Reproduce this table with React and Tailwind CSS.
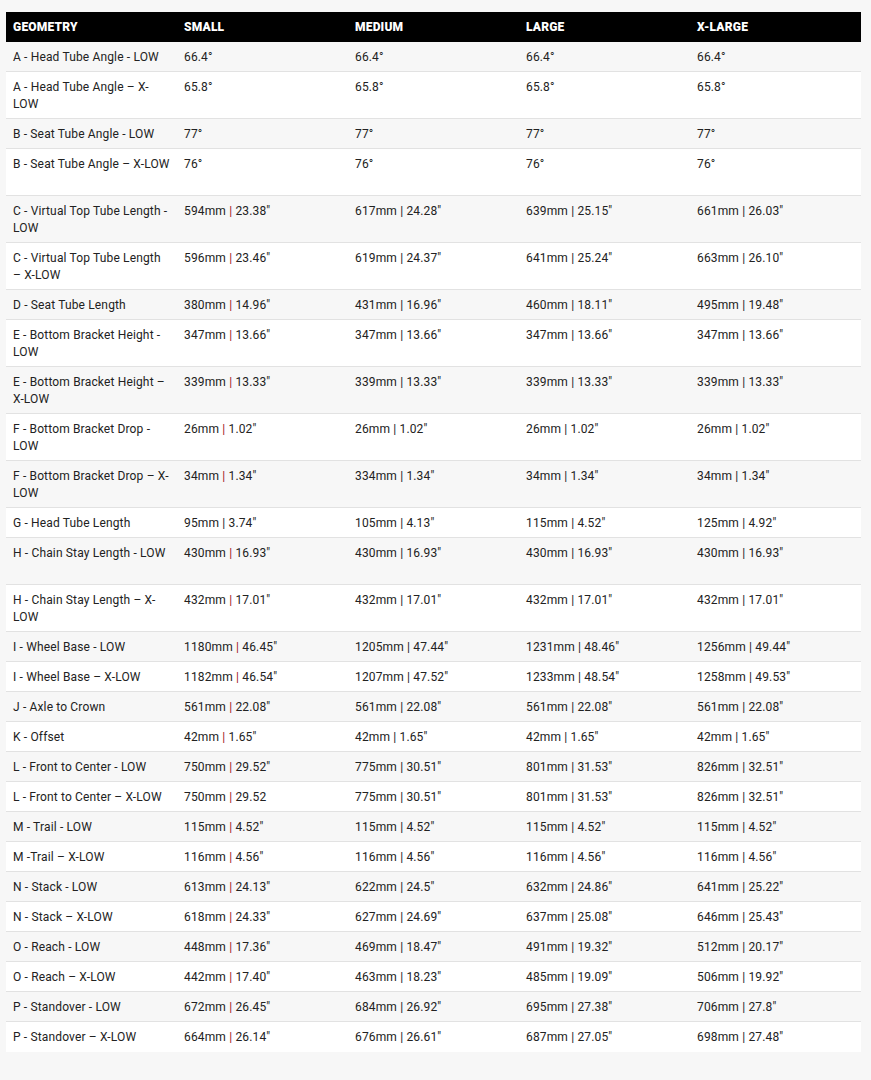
const SIZES = ['SMALL', 'MEDIUM', 'LARGE', 'X-LARGE'];

// label lines, values; a second empty line keeps the tall rows tall
const ROWS = [
  [['A - Head Tube Angle - LOW'], ['66.4°', '66.4°', '66.4°', '66.4°']],
  [['A - Head Tube Angle – X-', 'LOW'], ['65.8°', '65.8°', '65.8°', '65.8°']],
  [['B - Seat Tube Angle - LOW'], ['77°', '77°', '77°', '77°']],
  [['B - Seat Tube Angle – X-LOW', ''], ['76°', '76°', '76°', '76°']],
  [['C - Virtual Top Tube Length -', 'LOW'], ['594mm | 23.38"', '617mm | 24.28"', '639mm | 25.15"', '661mm | 26.03"']],
  [['C - Virtual Top Tube Length', '– X-LOW'], ['596mm | 23.46"', '619mm | 24.37"', '641mm | 25.24"', '663mm | 26.10"']],
  [['D - Seat Tube Length'], ['380mm | 14.96"', '431mm | 16.96"', '460mm | 18.11"', '495mm | 19.48"']],
  [['E - Bottom Bracket Height -', 'LOW'], ['347mm | 13.66"', '347mm | 13.66"', '347mm | 13.66"', '347mm | 13.66"']],
  [['E - Bottom Bracket Height –', 'X-LOW'], ['339mm | 13.33"', '339mm | 13.33"', '339mm | 13.33"', '339mm | 13.33"']],
  [['F - Bottom Bracket Drop -', 'LOW'], ['26mm | 1.02"', '26mm | 1.02"', '26mm | 1.02"', '26mm | 1.02"']],
  [['F - Bottom Bracket Drop – X-', 'LOW'], ['34mm | 1.34"', '334mm | 1.34"', '34mm | 1.34"', '34mm | 1.34"']],
  [['G - Head Tube Length'], ['95mm | 3.74"', '105mm | 4.13"', '115mm | 4.52"', '125mm | 4.92"']],
  [['H - Chain Stay Length - LOW', ''], ['430mm | 16.93"', '430mm | 16.93"', '430mm | 16.93"', '430mm | 16.93"']],
  [['H - Chain Stay Length – X-', 'LOW'], ['432mm | 17.01"', '432mm | 17.01"', '432mm | 17.01"', '432mm | 17.01"']],
  [['I - Wheel Base - LOW'], ['1180mm | 46.45"', '1205mm | 47.44"', '1231mm | 48.46"', '1256mm | 49.44"']],
  [['I - Wheel Base – X-LOW'], ['1182mm | 46.54"', '1207mm | 47.52"', '1233mm | 48.54"', '1258mm | 49.53"']],
  [['J - Axle to Crown'], ['561mm | 22.08"', '561mm | 22.08"', '561mm | 22.08"', '561mm | 22.08"']],
  [['K - Offset'], ['42mm | 1.65"', '42mm | 1.65"', '42mm | 1.65"', '42mm | 1.65"']],
  [['L - Front to Center - LOW'], ['750mm | 29.52"', '775mm | 30.51"', '801mm | 31.53"', '826mm | 32.51"']],
  [['L - Front to Center – X-LOW'], ['750mm | 29.52', '775mm | 30.51"', '801mm | 31.53"', '826mm | 32.51"']],
  [['M - Trail - LOW'], ['115mm | 4.52"', '115mm | 4.52"', '115mm | 4.52"', '115mm | 4.52"']],
  [['M -Trail – X-LOW'], ['116mm | 4.56"', '116mm | 4.56"', '116mm | 4.56"', '116mm | 4.56"']],
  [['N - Stack - LOW'], ['613mm | 24.13"', '622mm | 24.5"', '632mm | 24.86"', '641mm | 25.22"']],
  [['N - Stack – X-LOW'], ['618mm | 24.33"', '627mm | 24.69"', '637mm | 25.08"', '646mm | 25.43"']],
  [['O - Reach - LOW'], ['448mm | 17.36"', '469mm | 18.47"', '491mm | 19.32"', '512mm | 20.17"']],
  [['O - Reach – X-LOW'], ['442mm | 17.40"', '463mm | 18.23"', '485mm | 19.09"', '506mm | 19.92"']],
  [['P - Standover - LOW'], ['672mm | 26.45"', '684mm | 26.92"', '695mm | 27.38"', '706mm | 27.8"']],
  [['P - Standover – X-LOW'], ['664mm | 26.14"', '676mm | 26.61"', '687mm | 27.05"', '698mm | 27.48"']],
];

function Value({ text, red }) {
  const parts = text.split(' | ');
  if (parts.length < 2) return text;
  return (
    <>
      {parts[0]} <span className={red ? 'text-[#a3161a]' : ''}>|</span> {parts[1]}
    </>
  );
}

export default function App() {
  return (
    <div
      className="min-h-[1080px] bg-[#f7f7f7] pt-[12px] px-[6px] pb-[29px] text-[#222]"
      style={{ fontFamily: 'Roboto, "Liberation Sans", sans-serif' }}
    >
      <table className="w-[855px] table-fixed border-collapse">
        <thead>
          <tr className="bg-black text-white">
            <th className="w-[171px] h-[30px] pl-[7px] text-left text-[12px] font-black tracking-[0.2px]">GEOMETRY</th>
            {SIZES.map((s) => (
              <th key={s} className="w-[171px] pl-[7px] text-left text-[12px] font-black tracking-[0.2px]">
                {s}
              </th>
            ))}
          </tr>
        </thead>
        <tbody>
          {ROWS.map(([label, vals], i) => (
            <tr
              key={i}
              className={`border-b ${i % 2 === 0 ? 'bg-[#f7f7f7]' : 'bg-white'} ${
                i < ROWS.length - 1 ? 'border-[#e2e2e2]' : 'border-white'
              }`}
            >
              <td className="pl-[7px] pr-[3px] pt-[7px] pb-[5px] align-top text-[12px] leading-[17px] whitespace-nowrap tracking-[0.15px]">
                {label.map((l, k) => (
                  <div key={k}>{l || '\u00a0'}</div>
                ))}
              </td>
              {vals.map((v, k) => (
                <td
                  key={k}
                  className="pl-[7px] pt-[7px] pb-[5px] align-top text-[12px] leading-[17px] whitespace-nowrap tracking-[0.15px]"
                >
                  <Value text={v} red={k === 0 && i !== 11} />
                </td>
              ))}
            </tr>
          ))}
        </tbody>
      </table>
    </div>
  );
}
